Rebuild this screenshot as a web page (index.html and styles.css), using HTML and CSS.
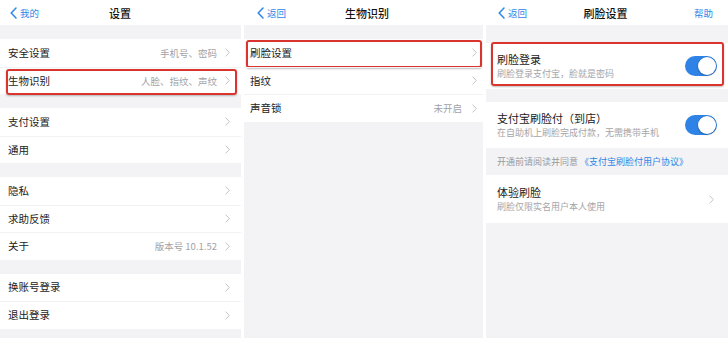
FILE: index.html
```html
<!DOCTYPE html>
<html lang="zh-CN">
<head>
<meta charset="utf-8">
<title>设置</title>
<link rel="stylesheet" href="styles.css">
</head>
<body>
<div class="screens">
  <!-- Panel 1 -->
  <section class="panel p1">
    <header class="nav">
      <a class="back"><svg width="7" height="12" viewBox="0 0 7 12"><polyline points="6,1 1.2,6 6,11" fill="none" stroke="#2e86e8" stroke-width="1.5" stroke-linecap="round" stroke-linejoin="round"/></svg><span>我的</span></a>
      <h1 class="title">设置</h1>
      <span class="nav-right"></span>
    </header>
    <div class="gap g14"></div>
    <div class="group">
      <div class="row"><span class="label">安全设置</span><span class="value">手机号、密码</span><svg class="chev" width="5" height="9" viewBox="0 0 5 9"><polyline points="0.6,0.6 4.3,4.5 0.6,8.4" fill="none" stroke="#c4c4c8" stroke-width="1"/></svg></div>
      <div class="row hl hl-p1"><span class="label">生物识别</span><span class="value">人脸、指纹、声纹</span><svg class="chev" width="5" height="9" viewBox="0 0 5 9"><polyline points="0.6,0.6 4.3,4.5 0.6,8.4" fill="none" stroke="#c4c4c8" stroke-width="1"/></svg></div>
    </div>
    <div class="gap g14"></div>
    <div class="group">
      <div class="row"><span class="label">支付设置</span><span class="value"></span><svg class="chev" width="5" height="9" viewBox="0 0 5 9"><polyline points="0.6,0.6 4.3,4.5 0.6,8.4" fill="none" stroke="#c4c4c8" stroke-width="1"/></svg></div>
      <div class="row"><span class="label">通用</span><span class="value"></span><svg class="chev" width="5" height="9" viewBox="0 0 5 9"><polyline points="0.6,0.6 4.3,4.5 0.6,8.4" fill="none" stroke="#c4c4c8" stroke-width="1"/></svg></div>
    </div>
    <div class="gap g14"></div>
    <div class="group">
      <div class="row"><span class="label">隐私</span><span class="value"></span><svg class="chev" width="5" height="9" viewBox="0 0 5 9"><polyline points="0.6,0.6 4.3,4.5 0.6,8.4" fill="none" stroke="#c4c4c8" stroke-width="1"/></svg></div>
      <div class="row"><span class="label">求助反馈</span><span class="value"></span><svg class="chev" width="5" height="9" viewBox="0 0 5 9"><polyline points="0.6,0.6 4.3,4.5 0.6,8.4" fill="none" stroke="#c4c4c8" stroke-width="1"/></svg></div>
      <div class="row"><span class="label">关于</span><span class="value">版本号 10.1.52</span><svg class="chev" width="5" height="9" viewBox="0 0 5 9"><polyline points="0.6,0.6 4.3,4.5 0.6,8.4" fill="none" stroke="#c4c4c8" stroke-width="1"/></svg></div>
    </div>
    <div class="gap g14"></div>
    <div class="group">
      <div class="row"><span class="label">换账号登录</span><span class="value"></span><svg class="chev" width="5" height="9" viewBox="0 0 5 9"><polyline points="0.6,0.6 4.3,4.5 0.6,8.4" fill="none" stroke="#c4c4c8" stroke-width="1"/></svg></div>
      <div class="row"><span class="label">退出登录</span><span class="value"></span><svg class="chev" width="5" height="9" viewBox="0 0 5 9"><polyline points="0.6,0.6 4.3,4.5 0.6,8.4" fill="none" stroke="#c4c4c8" stroke-width="1"/></svg></div>
    </div>
    <div class="fill"></div>
  </section>

  <!-- Panel 2 -->
  <section class="panel p2">
    <header class="nav">
      <a class="back"><svg width="7" height="12" viewBox="0 0 7 12"><polyline points="6,1 1.2,6 6,11" fill="none" stroke="#2e86e8" stroke-width="1.5" stroke-linecap="round" stroke-linejoin="round"/></svg><span>返回</span></a>
      <h1 class="title">生物识别</h1>
      <span class="nav-right"></span>
    </header>
    <div class="gap g14"></div>
    <div class="group">
      <div class="row hl hl-p2"><span class="label">刷脸设置</span><span class="value"></span><svg class="chev" width="5" height="9" viewBox="0 0 5 9"><polyline points="0.6,0.6 4.3,4.5 0.6,8.4" fill="none" stroke="#c4c4c8" stroke-width="1"/></svg></div>
      <div class="row"><span class="label">指纹</span><span class="value"></span><svg class="chev" width="5" height="9" viewBox="0 0 5 9"><polyline points="0.6,0.6 4.3,4.5 0.6,8.4" fill="none" stroke="#c4c4c8" stroke-width="1"/></svg></div>
      <div class="row"><span class="label">声音锁</span><span class="value">未开启</span><svg class="chev" width="5" height="9" viewBox="0 0 5 9"><polyline points="0.6,0.6 4.3,4.5 0.6,8.4" fill="none" stroke="#c4c4c8" stroke-width="1"/></svg></div>
    </div>
    <div class="fill"></div>
  </section>

  <!-- Panel 3 -->
  <section class="panel p3">
    <header class="nav">
      <a class="back"><svg width="7" height="12" viewBox="0 0 7 12"><polyline points="6,1 1.2,6 6,11" fill="none" stroke="#2e86e8" stroke-width="1.5" stroke-linecap="round" stroke-linejoin="round"/></svg><span>返回</span></a>
      <h1 class="title">刷脸设置</h1>
      <a class="nav-right help">帮助</a>
    </header>
    <div class="gap g18"></div>
    <div class="group">
      <div class="row tall hl hl-p3">
        <div class="texts"><span class="label">刷脸登录</span><span class="sub">刷脸登录支付宝，脸就是密码</span></div>
        <span class="toggle"><span class="knob"></span></span>
      </div>
    </div>
    <div class="gap g13"></div>
    <div class="group">
      <div class="row tall">
        <div class="texts"><span class="label">支付宝刷脸付（到店）</span><span class="sub">在自助机上刷脸完成付款，无需携带手机</span></div>
        <span class="toggle"><span class="knob"></span></span>
      </div>
    </div>
    <p class="note">开通前请阅读并同意 <a class="link">《支付宝刷脸付用户协议》</a></p>
    <div class="group">
      <div class="row tall t48">
        <div class="texts"><span class="label">体验刷脸</span><span class="sub">刷脸仅限实名用户本人使用</span></div>
        <svg class="chev" width="5" height="9" viewBox="0 0 5 9"><polyline points="0.6,0.6 4.3,4.5 0.6,8.4" fill="none" stroke="#c4c4c8" stroke-width="1"/></svg>
      </div>
    </div>
    <div class="fill"></div>
  </section>
</div>
</body>
</html>
```

FILE: styles.css
```css
* { box-sizing: border-box; }
html, body { margin: 0; padding: 0; background: #ffffff; }
body {
  font-family: "Noto Sans CJK SC", "Noto Sans", "Liberation Sans", sans-serif;
  color: #1b1b1b;
  width: 728px;
  height: 340px;
  overflow: hidden;
}
.screens {
  display: flex;
  gap: 3px;
  height: 338px;
}
.panel {
  display: flex;
  flex-direction: column;
  background: #f3f3f5;
  height: 338px;
  overflow: hidden;
}
.p1 { width: 241px; --pl: 8px; --pr: 11px; }
.p2 { width: 239px; --pl: 6px; --pr: 6px; }
.p3 { width: 242px; --pl: 11px; --pr: 11px; }

.nav {
  height: 25px;
  flex: none;
  background: #ffffff;
  display: grid;
  grid-template-columns: 1fr auto 1fr;
  align-items: center;
  padding: 0 var(--pr) 0 10px;
}
.p3 .nav { padding-left: 12px; padding-right: 15px; }
.p2 .nav { padding-left: 13px; }
.back {
  display: flex;
  align-items: center;
  gap: 3px;
  color: #2e86e8;
  font-size: 9.5px;
  line-height: 12px;
  justify-self: start;
}
.title {
  margin: 0;
  font-size: 11px;
  font-weight: 500;
  line-height: 14px;
  color: #111;
}
.nav-right { justify-self: end; }
.help { color: #2e86e8; font-size: 9.5px; line-height: 12px; }

.gap { flex: none; }
.g14 { height: 14px; }
.g13 { height: 13px; }
.g18 { height: 18px; }

.group { background: #ffffff; flex: none; }
.row {
  position: relative;
  height: 27.5px;
  display: flex;
  align-items: center;
  padding: 0 var(--pr) 0 var(--pl);
  border-top: 1px solid #f2f2f4;
}
.row:first-child { border-top: none; }
.label {
  font-size: 10.5px;
  line-height: 14px;
  color: #1b1b1b;
  white-space: nowrap;
}
.value {
  margin-left: auto;
  font-size: 9.5px;
  color: #a2a2a6;
  white-space: nowrap;
  padding-right: 8px;
}
.p2 .value { padding-right: 10px; }
.chev { flex: none; display: block; margin-left: auto; }
.value + .chev { margin-left: 0; }

.hl::after {
  content: "";
  position: absolute;
  border: 2px solid #d9342d;
  border-radius: 3px;
  box-shadow: 0 1px 2px rgba(0,0,0,0.25);
  pointer-events: none;
}
.hl-p1::after { top: 1px; bottom: -1px; left: 6px; right: 4px; }
.hl-p2::after { top: 1px; bottom: -1px; left: 2px; right: 1px; }
.hl-p3::after { top: -1px; bottom: 3px; left: 5px; right: 4px; }

.tall { height: 46px; }
.t48 { height: 48px; }
.texts { display: flex; flex-direction: column; }
.tall .label { font-size: 11px; line-height: 15px; }
.sub {
  font-size: 9px;
  line-height: 14px;
  color: #a5a5a9;
  white-space: nowrap;
}
.p3 .chev { margin-right: 3px; }

.toggle {
  margin-left: auto;
  width: 32px;
  height: 20px;
  border-radius: 10px;
  background: #2f83e6;
  display: flex;
  align-items: center;
  justify-content: flex-end;
  padding: 1px;
  flex: none;
}
.knob {
  width: 18px;
  height: 18px;
  border-radius: 50%;
  background: #ffffff;
  box-shadow: 0 0 0 0.5px rgba(0,0,0,0.15), 0 1px 2px rgba(0,0,0,0.2);
}

.note {
  margin: 0;
  height: 27px;
  flex: none;
  display: flex;
  align-items: center;
  padding-left: var(--pl);
  font-size: 9px;
  color: #9a9a9e;
  white-space: pre;
}
.link { color: #2f86e6; }
.fill { flex: 1; }
```
